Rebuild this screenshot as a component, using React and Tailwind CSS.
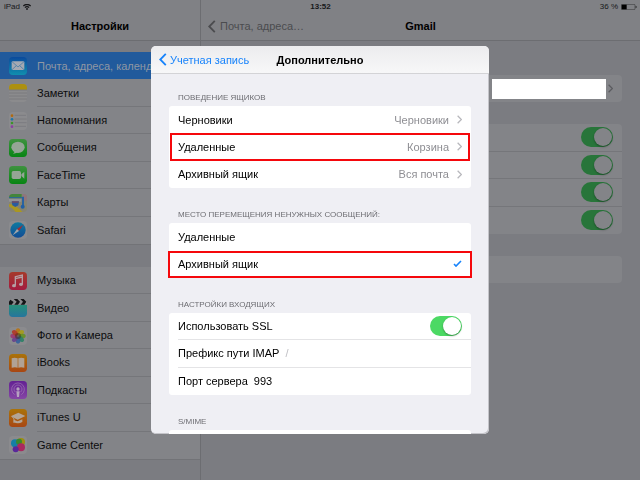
import React from "react";
import clsx from "clsx";

const icons = {
  mail: (
    <>
      <defs>
        <linearGradient id="mail" x2="0" y2="1">
          <stop stopColor="#0b4a9c" />
          <stop offset="1" stopColor="#108fae" />
        </linearGradient>
      </defs>
      <rect width="54" height="54" rx="11" fill="url(#mail)" />
      <rect x="8" y="13" width="38" height="26" rx="3" fill="#a4a9b2" />
      <path d="M9 14l18 16 18-16M9 38l13-12M45 38L32 26" fill="none" stroke="#3474a5" strokeWidth="2" />
    </>
  ),
  notes: (
    <>
      <rect width="54" height="54" rx="11" fill="#8b8b8d" />
      <path d="M0 17V11A11 11 0 0 1 11 0h32a11 11 0 0 1 11 11v6z" fill="#ad9010" />
      <path d="M0 18h54M0 27h54M0 36h54M0 45h54" stroke="#727276" strokeWidth="2" />
    </>
  ),
  reminders: (
    <>
      <rect width="54" height="54" rx="11" fill="#8b8b8e" />
      <path d="M17 10h34M17 21h36M17 32h36M17 43h34" stroke="#75757a" strokeWidth="2" />
      <circle cx="9" cy="11" r="4" fill="#b06a10" />
      <circle cx="9" cy="22" r="4" fill="#1d75a8" />
      <circle cx="9" cy="33" r="4" fill="#3c942a" />
      <circle cx="9" cy="44" r="4" fill="#8a3fa0" />
    </>
  ),
  messages: (
    <>
      <defs>
        <linearGradient id="green" x2="0" y2="1">
          <stop stopColor="#3f9240" />
          <stop offset="1" stopColor="#078513" />
        </linearGradient>
      </defs>
      <rect width="54" height="54" rx="11" fill="url(#green)" />
      <ellipse cx="27" cy="25" rx="20" ry="17" fill="#95a596" />
      <path d="M17 36c0 4-2 6-6 8 6 0 11-2 14-5z" fill="#95a596" />
    </>
  ),
  facetime: (
    <>
      <rect width="54" height="54" rx="11" fill="url(#green)" />
      <rect x="8" y="15" width="28" height="24" rx="5" fill="#95a596" />
      <path d="M37 25l9-8v21l-9-8z" fill="#95a596" />
    </>
  ),
  maps: (
    <>
      <defs>
        <clipPath id="tile">
          <rect width="54" height="54" rx="11" />
        </clipPath>
      </defs>
      <g clipPath="url(#tile)">
        <rect width="54" height="54" fill="#858372" />
        <path d="M0 0h38v13H0z" fill="#43853c" />
        <path d="M40 0h14v20H44z" fill="#91757d" />
        <path d="M0 30c14 0 28 10 40 24H20C14 46 8 40 0 38z" fill="#aa9722" />
        <path d="M0 14h37v9H0z" fill="#929397" />
        <path d="M42 8v30" stroke="#2963a2" strokeWidth="6" />
        <path d="M0 11h42" stroke="#2963a2" strokeWidth="3" />
        <circle cx="41" cy="38" r="6" fill="#205fa5" />
        <path d="M8 22h22l-2 12-9 5-9-5z" fill="#295c9f" />
        <path d="M9 24h20" stroke="#914047" strokeWidth="3" />
      </g>
    </>
  ),
  safari: (
    <>
      <defs>
        <linearGradient id="compass" x2="0" y2="1">
          <stop stopColor="#0e7aa0" />
          <stop offset="1" stopColor="#134c94" />
        </linearGradient>
      </defs>
      <rect width="54" height="54" rx="11" fill="#8b8b8e" />
      <circle cx="27" cy="27" r="23" fill="url(#compass)" />
      <path d="M43 11L24 24l6 6z" fill="#a42b2f" />
      <path d="M11 43l13-19 6 6z" fill="#a2a5ab" />
    </>
  ),
  music: (
    <>
      <defs>
        <linearGradient id="music" x2="0" y2="1">
          <stop stopColor="#a53a2b" />
          <stop offset="1" stopColor="#a31b40" />
        </linearGradient>
      </defs>
      <rect width="54" height="54" rx="11" fill="url(#music)" />
      <path d="M19 40V14l21-5v27M19 20l21-5" fill="none" stroke="#b5a0a5" strokeWidth="4" />
      <ellipse cx="15" cy="41" rx="6" ry="5" fill="#b5a0a5" />
      <ellipse cx="36" cy="37" rx="6" ry="5" fill="#b5a0a5" />
    </>
  ),
  video: (
    <>
      <defs>
        <linearGradient id="video" x2="0" y2="1">
          <stop stopColor="#279078" />
          <stop offset="1" stopColor="#26759d" />
        </linearGradient>
      </defs>
      <path d="M0 17h54v26a11 11 0 0 1-11 11H11A11 11 0 0 1 0 43z" fill="url(#video)" />
      <path d="M0 17V8A11 11 0 0 1 11 0h32a11 11 0 0 1 11 8v9z" fill="#8b8b8e" />
      <path
        d="M0 8l4-6 10 7-6 8H0zM14 0h11l8 8-6 9H16l7-9zM34 0h10l8 8-6 9H35l7-9z"
        fill="#141517"
      />
    </>
  ),
  photos: (
    <>
      <rect width="54" height="54" rx="11" fill="#8b8b8e" />
      <g fillOpacity="0.88">
        <ellipse cx="27" cy="14" rx="7" ry="10" fill="#b87310" />
        <ellipse cx="27" cy="14" rx="7" ry="10" fill="#a69c17" transform="rotate(45 27 27)" />
        <ellipse cx="27" cy="14" rx="7" ry="10" fill="#668f20" transform="rotate(90 27 27)" />
        <ellipse cx="27" cy="14" rx="7" ry="10" fill="#298164" transform="rotate(135 27 27)" />
        <ellipse cx="27" cy="14" rx="7" ry="10" fill="#315f9c" transform="rotate(180 27 27)" />
        <ellipse cx="27" cy="14" rx="7" ry="10" fill="#65408c" transform="rotate(225 27 27)" />
        <ellipse cx="27" cy="14" rx="7" ry="10" fill="#9b3672" transform="rotate(270 27 27)" />
        <ellipse cx="27" cy="14" rx="7" ry="10" fill="#b23423" transform="rotate(315 27 27)" />
      </g>
      <circle cx="27" cy="27" r="9" fill="#3b2d22" fillOpacity="0.5" />
    </>
  ),
  ibooks: (
    <>
      <defs>
        <linearGradient id="orange" x2="0" y2="1">
          <stop stopColor="#aa7309" />
          <stop offset="1" stopColor="#a84714" />
        </linearGradient>
      </defs>
      <rect width="54" height="54" rx="11" fill="url(#orange)" />
      <path d="M8 13c7-3 13-2 18 0v28c-5-2-11-2-18 0zM46 13c-7-3-13-2-18 0v28c5-2 11-2 18 0z" fill="#b1a294" />
    </>
  ),
  podcasts: (
    <>
      <defs>
        <linearGradient id="podcasts" x2="0" y2="1">
          <stop stopColor="#632093" />
          <stop offset="1" stopColor="#8546a5" />
        </linearGradient>
      </defs>
      <rect width="54" height="54" rx="11" fill="url(#podcasts)" />
      <g fill="none" stroke="#a27bb6" strokeWidth="2">
        <path d="M17 41a19 19 0 1 1 20 0" />
        <path d="M19 33a12 12 0 1 1 16 0" />
      </g>
      <circle cx="27" cy="24" r="5" fill="#b5a1bf" />
      <path d="M22 31h10l-2 17h-6z" fill="#b5a1bf" />
    </>
  ),
  itunesu: (
    <>
      <rect width="54" height="54" rx="11" fill="url(#orange)" />
      <path d="M5 22l23-11 21 10-23 11z" fill="#b3a496" />
      <path d="M14 32l12 5 14-6v8c-9 5-18 5-26 0z" fill="#b3a496" />
      <path d="M10 25l5 4v13" fill="none" stroke="#b3a496" strokeWidth="3" />
    </>
  ),
  gamecenter: (
    <>
      <rect width="54" height="54" rx="11" fill="#8b8b8e" />
      <circle cx="36" cy="18" r="12" fill="#9c8e12" />
      <circle cx="18" cy="22" r="12" fill="#1580a5" />
      <circle cx="30" cy="17" r="9" fill="#398830" />
      <circle cx="36" cy="34" r="12" fill="#aa285f" />
      <circle cx="20" cy="40" r="9" fill="#59289a" />
    </>
  ),
};

const menu = [
  [
    { icon: "mail", text: "Почта, адреса, календари", active: true },
    { icon: "notes", text: "Заметки" },
    { icon: "reminders", text: "Напоминания" },
    { icon: "messages", text: "Сообщения" },
    { icon: "facetime", text: "FaceTime" },
    { icon: "maps", text: "Карты" },
    { icon: "safari", text: "Safari" },
  ],
  [
    { icon: "music", text: "Музыка" },
    { icon: "video", text: "Видео" },
    { icon: "photos", text: "Фото и Камера" },
    { icon: "ibooks", text: "iBooks" },
    { icon: "podcasts", text: "Подкасты" },
    { icon: "itunesu", text: "iTunes U" },
    { icon: "gamecenter", text: "Game Center" },
  ],
];

const folders = [
  { text: "Черновики", value: "Черновики" },
  { text: "Удаленные", value: "Корзина", marked: true },
  { text: "Архивный ящик", value: "Вся почта" },
];

const Chevron = ({ left, className }) => (
  <svg viewBox="0 0 8 14" fill="none" stroke="currentColor" className={className} aria-hidden="true">
    <path d={left ? "M7 1L1 7l6 6" : "M1 1l6 6-6 6"} strokeWidth="2" />
  </svg>
);

const Switch = ({ label, dimmed }) => (
  <input
    type="checkbox"
    role="switch"
    aria-label={label}
    defaultChecked
    className={clsx(
      "h-5 w-8 shrink-0 appearance-none rounded-full p-px before:block before:size-[18px] before:rounded-full before:shadow-[0_1px_2px_rgba(0,0,0,0.35)] checked:before:ml-auto",
      dimmed
        ? "bg-[#6f7074] before:bg-[#838488] checked:bg-[#28753a]"
        : "bg-gray-300 before:bg-white checked:bg-[#4cd964]"
    )}
  />
);

const Caption = ({ id, children }) => (
  <h3 id={id} className="px-[9px] pb-[2px] text-[8px] leading-[13px] whitespace-nowrap text-[#6d6d72] uppercase">
    {children}
  </h3>
);

const StatusBar = () => (
  <div className="absolute inset-x-0 top-0 grid h-[13px] grid-cols-3 items-center pr-[3px] pl-1 text-[8px] leading-3 text-[#17181a]">
    <div className="flex items-center gap-[3px]">
      iPad
      <svg viewBox="0 0 24 18" className="h-[6px] w-2" fill="none" stroke="currentColor" strokeWidth="4" aria-hidden="true">
        <path d="M1 6c6-6 16-6 22 0M6 11c3-4 9-4 12 0" />
        <circle cx="12" cy="15" r="1" />
      </svg>
    </div>
    <time className="text-center font-bold">13:52</time>
    <div className="flex items-center justify-end gap-[3px]">
      36 %
      <svg viewBox="0 0 48 18" className="h-[6px] w-4" aria-hidden="true">
        <rect x="1" y="1" width="41" height="16" rx="3" fill="none" stroke="#3a3b3d" strokeWidth="2" />
        <rect x="2" y="2" width="15" height="14" fill="#000" />
        <path d="M44 6c4 0 4 6 0 6z" fill="#17181a" />
      </svg>
    </div>
  </div>
);

const Sidebar = () => (
  <aside className="w-[201px] shrink-0 border-r border-[#6c6d71]">
    <div className="flex h-[41px] items-center justify-center border-b border-[#6c6d71] bg-[#808185] pt-3">
      <h1 className="text-[11px] leading-[14px] font-bold text-black">Настройки</h1>
    </div>
    <nav className="flex flex-col gap-[22px] pt-[11px]">
      {menu.map((group, i) => (
        <ul key={i} className="grid min-h-[193px] auto-rows-fr border-b border-[#727377] bg-[#838488]">
          {group.map(({ icon, text, active }) => (
            <li key={icon} className="flex">
              <a
                href={`#${icon}`}
                className={clsx(
                  "flex w-full items-center gap-[10px] overflow-hidden pl-[9px]",
                  active ? "bg-[#215a9c] text-[#8f97a3]" : "text-[#0c0c0d]"
                )}
              >
                <svg viewBox="0 0 54 54" className="size-[18px] shrink-0" aria-hidden="true">
                  {icons[icon]}
                </svg>
                <span
                  className={clsx(
                    "flex flex-1 items-center self-stretch text-[11px] leading-[14px] whitespace-nowrap",
                    !active && icon !== "safari" && icon !== "gamecenter" && "border-b border-[#75767a]"
                  )}
                >
                  {text}
                </span>
              </a>
            </li>
          ))}
        </ul>
      ))}
    </nav>
  </aside>
);

const Account = () => (
  <main className="min-w-0 flex-1">
    <div className="grid h-[41px] grid-cols-[1fr_auto_1fr] items-center border-b border-[#6c6d71] bg-[#808185] px-[7px] pt-3">
      <a href="#mail" className="flex items-center gap-1 text-[11px] leading-[14px] text-[#4b4c4f]">
        <Chevron left className="h-[13px] w-2" />
        Почта, адреса…
      </a>
      <h2 className="text-[11px] leading-[14px] font-bold text-black">Gmail</h2>
    </div>
    <div className="flex flex-col gap-[22px] px-[18px] pt-[34px]">
      <a href="#account" aria-label="Учетная запись" className="flex h-[27px] items-center justify-end gap-[2px] rounded-sm bg-[#838488] pr-[9px]">
        <span className="h-5 w-[114px] bg-white" />
        <Chevron className="h-[9px] w-[5px] text-[#5b5c60]" />
      </a>
      <ul className="grid min-h-[110px] auto-rows-fr divide-y divide-[#75767a] rounded-sm bg-[#838488]">
        {["Почта", "Контакты", "Календари", "Заметки"].map((name) => (
          <li key={name} className="flex items-center justify-end pr-[9px]">
            <Switch label={name} dimmed />
          </li>
        ))}
      </ul>
      <div className="h-[27px] rounded-sm bg-[#838488]" />
    </div>
  </main>
);

const AdvancedDialog = () => (
  <section
    role="dialog"
    aria-labelledby="advanced"
    className="flex h-[388px] w-[338px] flex-col overflow-hidden rounded-[5px] bg-[#efeff4] text-[11px] leading-[14px] text-black shadow-[inset_-1px_-1px_0_#c4c4c9]"
  >
    <header className="grid h-7 shrink-0 grid-cols-[1fr_auto_1fr] items-center border-b border-[#d3d3d6] bg-linear-to-b from-[#ececee] to-[#f7f7f8] px-2">
      <button type="button" className="flex items-center gap-[3px] text-[#1783fb]">
        <Chevron left className="h-[13px] w-2" />
        Учетная запись
      </button>
      <h2 id="advanced" className="font-bold">
        Дополнительно
      </h2>
    </header>

    <div className="flex flex-col gap-5 px-[18px] pt-[17px]">
      <section aria-labelledby="folders">
        <Caption id="folders">Поведение ящиков</Caption>
        <ul className="grid min-h-[82px] auto-rows-fr rounded-[3px] bg-white">
          {folders.map(({ text, value, marked }) => (
            <li key={text} className="relative flex pl-[9px]">
              <button type="button" className="flex flex-1 items-center gap-2 pr-[9px]">
                <span>{text}</span>
                <span className="ml-auto text-[#8e8e93]">{value}</span>
                <Chevron className="h-[9px] w-[5px] text-[#b8b8bd]" />
              </button>
              {marked && <span className="pointer-events-none absolute inset-x-px inset-y-0 border-2 border-[#f5080c]" />}
            </li>
          ))}
        </ul>
      </section>

      <section aria-labelledby="target">
        <Caption id="target">Место перемещения ненужных сообщений:</Caption>
        <div className="grid min-h-[55px] auto-rows-fr rounded-[3px] bg-white">
          {["Удаленные", "Архивный ящик"].map((text, i) => (
            <label key={text} className="relative flex items-center justify-between px-[9px]">
              {text}
              <input type="radio" name="target" defaultChecked={i === 1} className="peer size-0 appearance-none" />
              <svg viewBox="0 0 9 8" className="hidden h-2 w-[9px] text-[#1783fb] peer-checked:block" fill="none" stroke="currentColor" strokeWidth="1.6" aria-hidden="true">
                <path d="M1 4l2 2 5-5" />
              </svg>
              {i === 1 && <span className="pointer-events-none absolute -inset-x-px inset-y-0 border-2 border-[#f5080c]" />}
            </label>
          ))}
        </div>
      </section>

      <section aria-labelledby="incoming">
        <Caption id="incoming">Настройки входящих</Caption>
        <div className="grid min-h-[82px] auto-rows-fr rounded-[3px] bg-white pl-[9px]">
          <div className="flex items-center justify-between border-b border-[#e4e4e6] pr-[9px]">
            <span>Использовать SSL</span>
            <Switch label="Использовать SSL" />
          </div>
          <label className="flex items-center gap-[6px] border-b border-[#e4e4e6] pr-[9px]">
            Префикс пути IMAP
            <input type="text" placeholder="/" className="min-w-0 flex-1 outline-none placeholder:text-[#c0c0c5]" />
          </label>
          <label className="flex items-center gap-[6px] pr-[9px]">
            Порт сервера
            <input type="text" defaultValue="993" className="min-w-0 flex-1 outline-none" />
          </label>
        </div>
      </section>

      <section aria-labelledby="smime">
        <Caption id="smime">S/MIME</Caption>
        <div className="h-[27px] rounded-[3px] bg-white" />
      </section>
    </div>
  </section>
);

const App = () => (
  <div className="relative flex min-h-screen bg-[#7b7c81] font-['Liberation_Sans',Arial,sans-serif]">
    <Sidebar />
    <Account />
    <StatusBar />
    <div className="fixed inset-0 flex items-center justify-center">
      <AdvancedDialog />
    </div>
  </div>
);

export default App;
